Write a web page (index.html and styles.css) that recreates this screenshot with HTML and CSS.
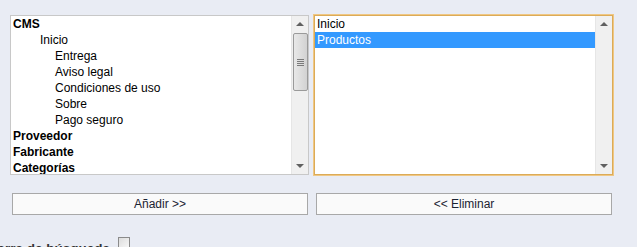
FILE: index.html
```html
<!DOCTYPE html>
<html lang="es">
<head>
  <meta charset="UTF-8">
  <title>Asociar páginas</title>
  <link rel="stylesheet" href="styles.css">
</head>
<body>
  <div class="picker">
    <div class="col">
      <div class="listbox">
        <ul class="options">
          <li class="group">CMS</li>
          <li class="lvl1">Inicio</li>
          <li class="lvl2">Entrega</li>
          <li class="lvl2">Aviso legal</li>
          <li class="lvl2">Condiciones de uso</li>
          <li class="lvl2">Sobre</li>
          <li class="lvl2">Pago seguro</li>
          <li class="group">Proveedor</li>
          <li class="group">Fabricante</li>
          <li class="group">Categorías</li>
        </ul>
        <div class="scrollbar">
          <span class="arrow up"></span>
          <span class="thumb"><i></i></span>
          <span class="arrow down"></span>
        </div>
      </div>
      <button class="btn">Añadir &gt;&gt;</button>
    </div>

    <div class="col">
      <div class="listbox focused">
        <ul class="options">
          <li>Inicio</li>
          <li class="selected">Productos</li>
        </ul>
        <div class="scrollbar empty">
          <span class="arrow up"></span>
          <span class="arrow down"></span>
        </div>
      </div>
      <button class="btn">&lt;&lt; Eliminar</button>
    </div>
  </div>

  <div class="field">
    <label class="field-label">Barra de búsqueda</label>
    <input type="checkbox" class="check">
  </div>
</body>
</html>
```

FILE: styles.css
```css
body {
  margin: 0;
  background: #e9ecf4;
  font-family: "Liberation Sans", Arial, sans-serif;
  font-size: 12px;
  color: #000;
  overflow: hidden;
}
.picker {
  display: flex;
  gap: 5px;
  padding: 15px 0 0 10px;
}
.col {
  width: 299px;
  display: flex;
  flex-direction: column;
}
.listbox {
  display: flex;
  height: 158px;
  overflow: hidden;
  background: #fff;
  border: 1px solid #c8c8c8;
}
.listbox.focused {
  border-color: #dcab57;
  box-shadow: 0 0 0 1px #efc784;
}
.options {
  flex: 1;
  list-style: none;
  margin: 0;
  padding: 0;
}
.options li {
  height: 16px;
  line-height: 16px;
  padding-left: 2px;
  white-space: nowrap;
}
.options li.group { font-weight: bold; }
.options li.lvl1 { padding-left: 29px; }
.options li.lvl2 { padding-left: 44px; }
.options li.selected {
  background: #3399ff;
  color: #fff;
}
.scrollbar {
  width: 16px;
  background: #f0f0f0;
  border-left: 1px solid #e6e6e6;
  display: flex;
  flex-direction: column;
  align-items: center;
}
.arrow {
  width: 0;
  height: 0;
  border-left: 4px solid transparent;
  border-right: 4px solid transparent;
}
.arrow.up {
  border-bottom: 4px solid #606060;
  margin-top: 6px;
}
.arrow.down {
  border-top: 4px solid #606060;
  margin-top: auto;
  margin-bottom: 6px;
}
.thumb {
  width: 13px;
  height: 56px;
  margin-top: 7px;
  border: 1px solid #9a9a9a;
  border-radius: 2px;
  background: linear-gradient(to right, #e8e8e8, #d2d2d2);
  display: flex;
  align-items: center;
  justify-content: center;
}
.thumb i {
  width: 7px;
  height: 7px;
  background: repeating-linear-gradient(to bottom, #7a7a7a 0 1px, transparent 1px 2px);
}
.btn {
  margin: 18px 1px 0 2px;
  height: 22px;
  background: #fafafa;
  border: 1px solid #a8a8a8;
  border-radius: 0;
  font-family: "Liberation Sans", Arial, sans-serif;
  font-size: 12px;
  color: #1a2333;
  padding: 0;
  cursor: pointer;
}
.field {
  display: flex;
  align-items: flex-start;
  gap: 8px;
  margin-top: 22px;
}
.field-label {
  width: 110px;
  display: flex;
  justify-content: flex-end;
  white-space: nowrap;
  font-size: 13.5px;
  font-weight: bold;
  color: #333;
  padding-top: 4px;
}
.check {
  appearance: none;
  margin: 0;
  width: 12px;
  height: 12px;
  border: 1px solid #8a8a8a;
  background: linear-gradient(to bottom right, #dcdcdc, #f8f8f8);
}
```
